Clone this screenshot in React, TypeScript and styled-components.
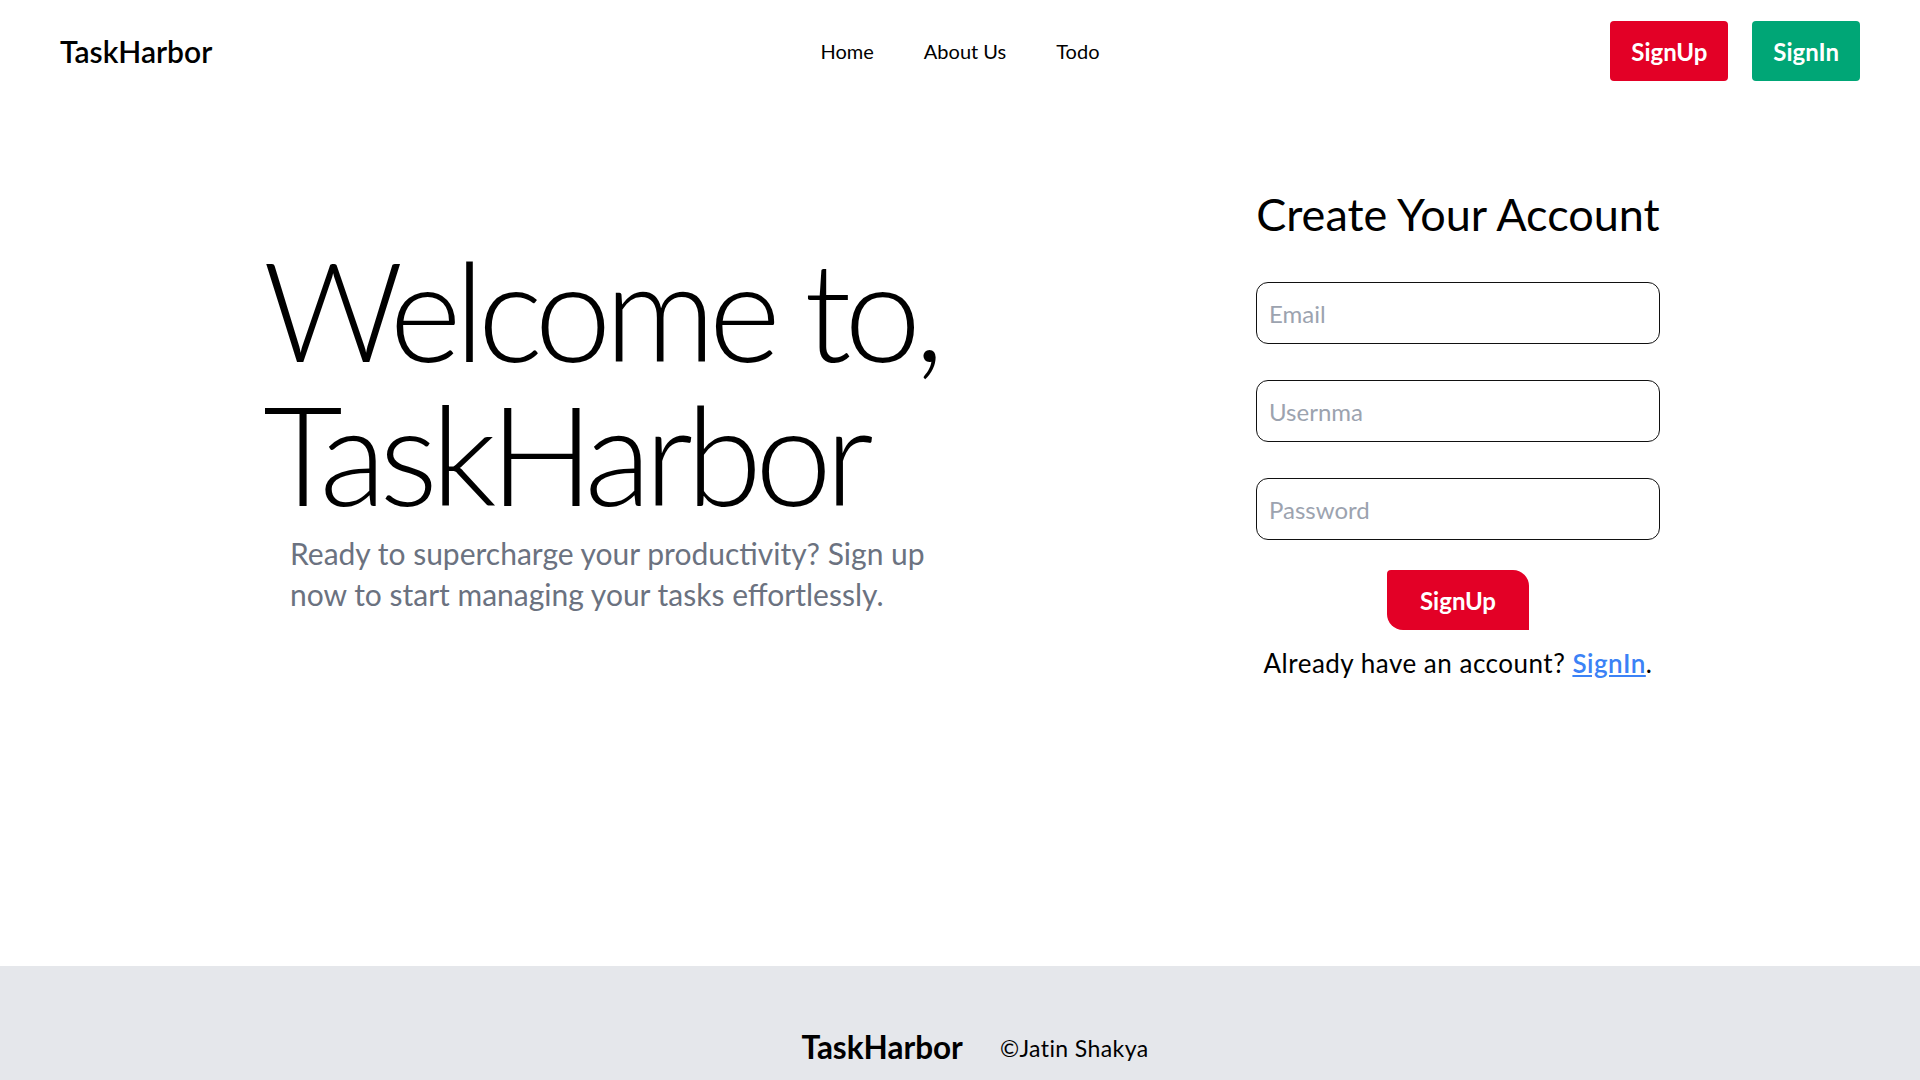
import styled, { createGlobalStyle } from "styled-components";

const GlobalStyle = createGlobalStyle`
  body {
    margin: 0;
    font-family: Lato, "Open Sans", sans-serif;
    color: #000;
    background: #fff;
  }
  * {
    box-sizing: border-box;
  }
`;

const Page = styled.div`
  min-height: 100vh;
  display: flex;
  flex-direction: column;
`;

const Header = styled.header`
  display: grid;
  grid-template-columns: 1fr auto 1fr;
  align-items: center;
  padding: 21px 60px;
`;

const Logo = styled.div`
  font-size: 30px;
  font-weight: 600;
  line-height: 1;
`;

const NavList = styled.ul`
  display: flex;
  gap: 50px;
  list-style: none;
  margin: 0;
  padding: 0;
`;

const NavItem = styled.li`
  font-size: 20px;
  cursor: pointer;
`;

const Actions = styled.div`
  justify-self: end;
  display: flex;
  gap: 24px;
`;

const HeaderButton = styled.button<{ $tone: "red" | "green" }>`
  height: 60px;
  padding: 0 21px;
  border: none;
  border-radius: 4px;
  background: ${({ $tone }) => ($tone === "red" ? "#e30026" : "#00a676")};
  color: #fff;
  font-family: inherit;
  font-size: 24px;
  font-weight: 700;
  cursor: pointer;
`;

const Main = styled.main`
  flex: 1;
  display: flex;
  justify-content: space-between;
  align-items: flex-start;
  padding: 0 260px 0 263px;
`;

const Hero = styled.section`
  margin-top: 135px;
`;

const Heading = styled.h1`
  margin: 0;
  font-size: 138px;
  font-weight: 300;
  line-height: 144px;
  letter-spacing: -7px;
`;

const Lead = styled.p`
  margin: 8px 0 0 27px;
  max-width: 660px;
  font-size: 30px;
  line-height: 41px;
  color: #6b7280;
`;

const FormCard = styled.form`
  width: 404px;
  margin-top: 86px;
  display: flex;
  flex-direction: column;
  align-items: center;
`;

const FormTitle = styled.h2`
  margin: 0 0 41px;
  font-size: 45px;
  font-weight: 400;
  line-height: 53px;
  white-space: nowrap;
`;

const Fields = styled.div`
  width: 100%;
  display: flex;
  flex-direction: column;
  gap: 36px;
`;

const Input = styled.input`
  width: 100%;
  height: 62px;
  padding: 0 12px;
  border: 1px solid #111;
  border-radius: 12px;
  font-family: inherit;
  font-size: 24px;
  outline: none;

  &::placeholder {
    color: #9ca3af;
  }
`;

const SubmitButton = styled.button`
  margin-top: 30px;
  height: 60px;
  padding: 0 33px;
  border: none;
  border-radius: 4px 16px 0 16px;
  background: #e30026;
  color: #fff;
  font-family: inherit;
  font-size: 24px;
  font-weight: 700;
  cursor: pointer;
`;

const Prompt = styled.p`
  margin: 14px 0 0;
  font-size: 26px;
  line-height: 1.5;
  letter-spacing: 0.5px;
  white-space: nowrap;

  a {
    color: #3b82f6;
    font-weight: 600;
    text-decoration: underline;
  }
`;

const Footer = styled.footer`
  height: 114px;
  background: #e5e7eb;
  display: flex;
  justify-content: center;
  align-items: baseline;
  gap: 37px;
  padding: 63px 0 0 30px;
`;

const FooterBrand = styled.span`
  font-size: 31.5px;
  font-weight: 700;
  line-height: 36px;
`;

const FooterCopy = styled.span`
  font-size: 23px;
  letter-spacing: 0.4px;
  position: relative;
  top: -2px;
`;

export default function App() {
  return (
    <>
      <GlobalStyle />
      <Page>
        <Header>
          <Logo>TaskHarbor</Logo>
          <NavList>
            <NavItem>Home</NavItem>
            <NavItem>About Us</NavItem>
            <NavItem>Todo</NavItem>
          </NavList>
          <Actions>
            <HeaderButton $tone="red">SignUp</HeaderButton>
            <HeaderButton $tone="green">SignIn</HeaderButton>
          </Actions>
        </Header>

        <Main>
          <Hero>
            <Heading>
              Welcome to,
              <br />
              TaskHarbor
            </Heading>
            <Lead>
              Ready to supercharge your productivity? Sign up now to start
              managing your tasks effortlessly.
            </Lead>
          </Hero>

          <FormCard onSubmit={(e) => e.preventDefault()}>
            <FormTitle>Create Your Account</FormTitle>
            <Fields>
              <Input type="email" placeholder="Email" />
              <Input type="text" placeholder="Usernma" />
              <Input type="password" placeholder="Password" />
            </Fields>
            <SubmitButton type="submit">SignUp</SubmitButton>
            <Prompt>
              Already have an account? <a href="#">SignIn</a>.
            </Prompt>
          </FormCard>
        </Main>

        <Footer>
          <FooterBrand>TaskHarbor</FooterBrand>
          <FooterCopy>©Jatin Shakya</FooterCopy>
        </Footer>
      </Page>
    </>
  );
}
